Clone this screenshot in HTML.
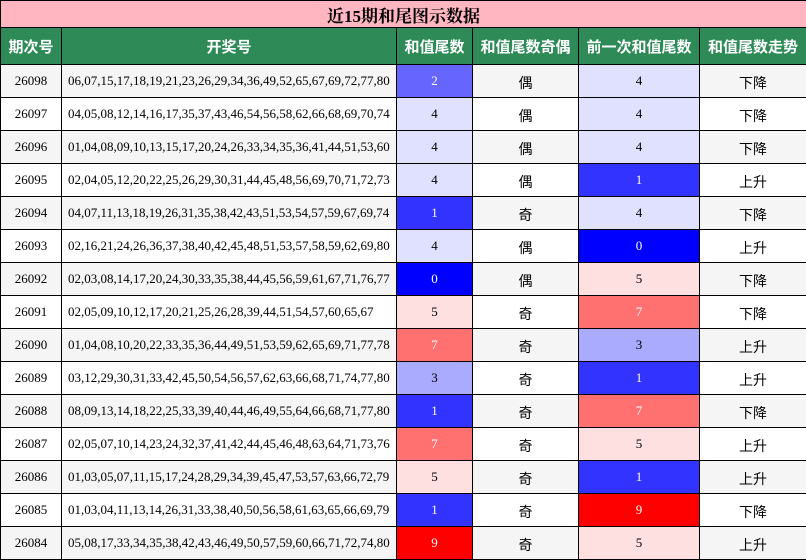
<!DOCTYPE html><html><head><meta charset="utf-8"><style>
body{margin:0;background:#fff;width:806px;height:560px;overflow:hidden}
table{border-collapse:collapse;table-layout:fixed;width:806px;position:absolute;left:0;top:0}
td,th{border:1px solid #000;padding:0;text-align:center;white-space:nowrap;overflow:hidden}
.t td{background:#ffb6c1;height:26px;font:bold 17px "Liberation Serif","Noto Serif CJK SC",serif;color:#000}
th{background:#2e8b57;color:#fff;height:36px;font:bold 15px "Liberation Sans","Noto Sans CJK SC",sans-serif}
td.d{height:32px;font:13px "Liberation Serif","Noto Serif CJK SC",serif;color:#000}
td.n{text-align:left;padding-left:6px}
td.c{font:14px "Liberation Sans","Noto Sans CJK SC",sans-serif;padding-top:3px;height:29px}
tr.g td{background:#f5f5f5}
td.w{color:#fff}
</style></head><body><table>
<colgroup><col style="width:61px"><col style="width:335px"><col style="width:76px"><col style="width:106px"><col style="width:121px"><col style="width:107px"></colgroup>
<tr class="t"><td colspan="6">近15期和尾图示数据</td></tr>
<tr><th>期次号</th><th>开奖号</th><th>和值尾数</th><th>和值尾数奇偶</th><th>前一次和值尾数</th><th>和值尾数走势</th></tr>
<tbody id="b"></tbody></table>
<script>
var C={0:'#0000ff',1:'#3333ff',2:'#6666ff',3:'#aaaaff',4:'#e0e0ff',5:'#ffe0e0',7:'#ff7070',9:'#ff0000'};
var W={0:1,1:1,2:1,7:1,9:1};
var D=[["26098","06,07,15,17,18,19,21,23,26,29,34,36,49,52,65,67,69,72,77,80",2,"偶",4,"下降"],
["26097","04,05,08,12,14,16,17,35,37,43,46,54,56,58,62,66,68,69,70,74",4,"偶",4,"下降"],
["26096","01,04,08,09,10,13,15,17,20,24,26,33,34,35,36,41,44,51,53,60",4,"偶",4,"下降"],
["26095","02,04,05,12,20,22,25,26,29,30,31,44,45,48,56,69,70,71,72,73",4,"偶",1,"上升"],
["26094","04,07,11,13,18,19,26,31,35,38,42,43,51,53,54,57,59,67,69,74",1,"奇",4,"下降"],
["26093","02,16,21,24,26,36,37,38,40,42,45,48,51,53,57,58,59,62,69,80",4,"偶",0,"上升"],
["26092","02,03,08,14,17,20,24,30,33,35,38,44,45,56,59,61,67,71,76,77",0,"偶",5,"下降"],
["26091","02,05,09,10,12,17,20,21,25,26,28,39,44,51,54,57,60,65,67",5,"奇",7,"下降"],
["26090","01,04,08,10,20,22,33,35,36,44,49,51,53,59,62,65,69,71,77,78",7,"奇",3,"上升"],
["26089","03,12,29,30,31,33,42,45,50,54,56,57,62,63,66,68,71,74,77,80",3,"奇",1,"上升"],
["26088","08,09,13,14,18,22,25,33,39,40,44,46,49,55,64,66,68,71,77,80",1,"奇",7,"下降"],
["26087","02,05,07,10,14,23,24,32,37,41,42,44,45,46,48,63,64,71,73,76",7,"奇",5,"上升"],
["26086","01,03,05,07,11,15,17,24,28,29,34,39,45,47,53,57,63,66,72,79",5,"奇",1,"上升"],
["26085","01,03,04,11,13,14,26,31,33,38,40,50,56,58,61,63,65,66,69,79",1,"奇",9,"下降"],
["26084","05,08,17,33,34,35,38,42,43,46,49,50,57,59,60,66,71,72,74,80",9,"奇",5,"上升"]];
var h='';D.forEach(function(r,i){h+='<tr'+(i%2==0?' class="g"':'')+'><td class="d">'+r[0]+'</td><td class="d n">'+r[1]+'</td><td class="d'+(W[r[2]]?' w':'')+'" style="background:'+C[r[2]]+'">'+r[2]+'</td><td class="d c">'+r[3]+'</td><td class="d'+(W[r[4]]?' w':'')+'" style="background:'+C[r[4]]+'">'+r[4]+'</td><td class="d c">'+r[5]+'</td></tr>';});
document.getElementById('b').innerHTML=h;
</script></body></html>
